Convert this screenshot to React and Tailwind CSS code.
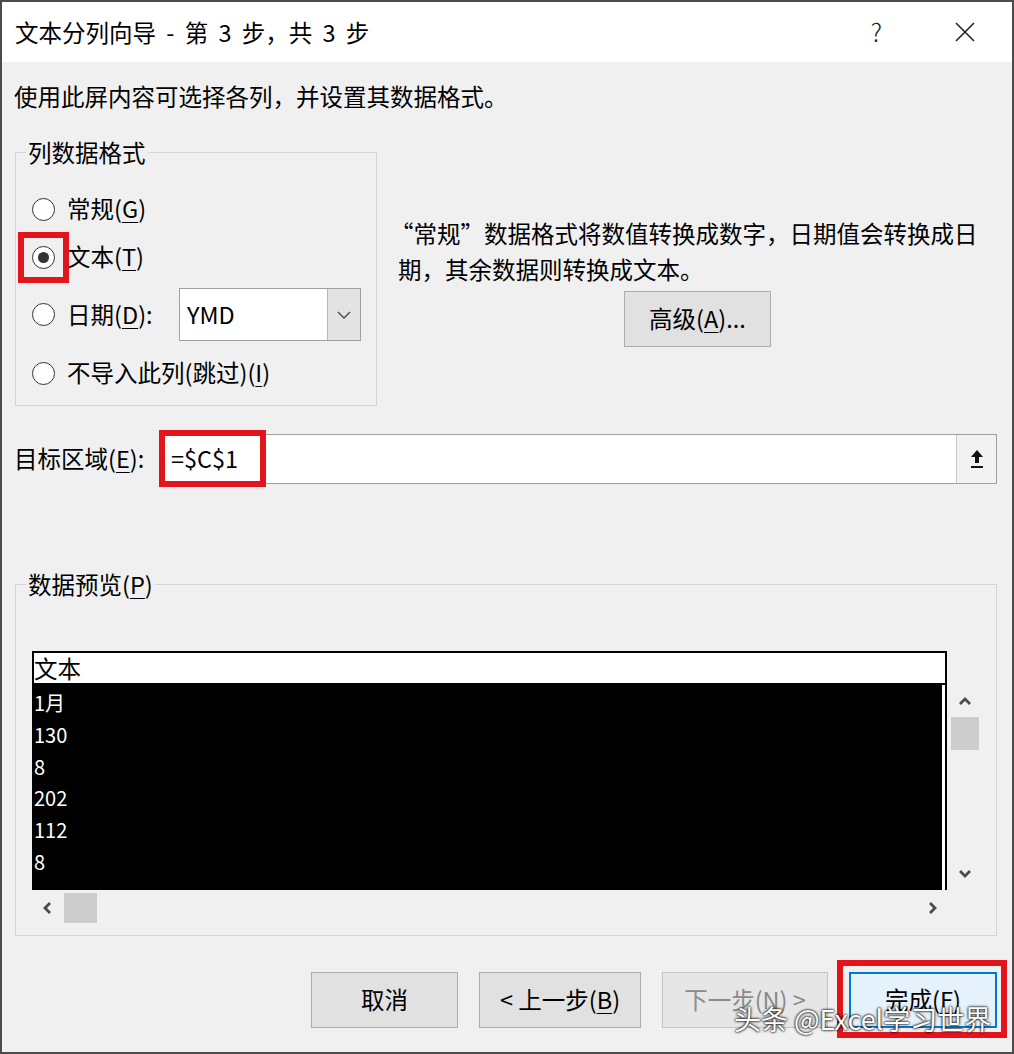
import React from "react";

const U = ({ children }) => (
  <span className="underline decoration-1 underline-offset-[4px]">{children}</span>
);

const Radio = ({ checked, highlight }) => (
  <div className="relative w-[23px] h-[23px] shrink-0">
    <div className="w-[23px] h-[23px] rounded-full border-[1.5px] border-[#333] bg-white flex items-center justify-center">
      {checked && <div className="w-[11px] h-[11px] rounded-full bg-[#333]" />}
    </div>
    {highlight && (
      <div className="absolute -left-[14px] -top-[14px] w-[51px] h-[51px] border-[6px] border-[#e3141b]" />
    )}
  </div>
);

const Chevron = ({ dir = "up", className = "" }) => {
  const pts = {
    up: "2,9 7,4 12,9",
    down: "2,4 7,9 12,4",
    left: "9,2 4,7 9,12",
    right: "5,2 10,7 5,12",
  }[dir];
  return (
    <svg className={className} width="14" height="14" viewBox="0 0 14 14">
      <polyline points={pts} fill="none" stroke="#4a4a4a" strokeWidth="2.8" strokeLinejoin="miter" />
    </svg>
  );
};

const Btn = ({ children, w, disabled, primary }) => (
  <div
    className={
      "h-[56px] flex items-center justify-center " +
      w +
      " " +
      (primary
        ? "bg-[#e5f1fb] border-2 border-[#0078d7] text-black"
        : disabled
        ? "bg-[#e6e6e6] border border-[#c4c4c4] text-[#8a8a8a]"
        : "bg-[#e1e1e1] border border-[#adadad] text-black")
    }
  >
    {children}
  </div>
);

export default function App() {
  const rows = ["1月", "130", "8", "202", "112", "8"];

  return (
    <div className="relative w-[1014px] h-[1054px] border-2 border-[#4b4b4b] bg-[#f0f0f0] flex flex-col overflow-hidden text-black text-[23.5px] font-['Noto_Sans_CJK_SC','Noto_Sans',sans-serif]">
      {/* title bar */}
      <div className="h-[60px] bg-white flex items-center pl-[13px] pr-[37px] shrink-0">
        <span className="leading-[30px] [word-spacing:5px]">文本分列向导 - 第 3 步，共 3 步</span>
        <span className="ml-auto text-[25px] font-light text-[#222]">?</span>
        <svg className="ml-[73px]" width="20" height="20" viewBox="0 0 20 20">
          <path d="M1 1 L19 19 M19 1 L1 19" stroke="#222" strokeWidth="1.6" />
        </svg>
      </div>

      <div className="flex-1 flex flex-col pl-[13px] pr-[15px]">
        <div className="mt-[19px] -ml-[1px] leading-[30px]">使用此屏内容可选择各列，并设置其数据格式。</div>

        <div className="flex mt-[26px]">
          <fieldset className="w-[362px] border border-[#d5d5d5] pl-[16px] pt-[18px] pb-[8px] shrink-0">
            <legend className="-ml-[6px] px-[2px] leading-[30px]">列数据格式</legend>
            <div className="flex items-center h-[48px]">
              <Radio />
              <span className="ml-[12px]">常规(<U>G</U>)</span>
            </div>
            <div className="flex items-center h-[48px]">
              <Radio checked highlight />
              <span className="ml-[12px]">文本(<U>T</U>)</span>
            </div>
            <div className="flex items-center h-[53px] mt-[7px]">
              <Radio />
              <span className="ml-[12px] w-[112px]">日期(<U>D</U>):</span>
              <div className="w-[182px] h-[53px] border border-[#a0a0a0] bg-white flex items-center">
                <span className="flex-1 pl-[7px]">YMD</span>
                <div className="w-[33px] h-full bg-[#e3e3e3] border-l border-[#b8b8b8] flex items-center justify-center">
                  <svg width="14" height="10" viewBox="0 0 14 10">
                    <polyline points="1,2 7,8 13,2" fill="none" stroke="#444" strokeWidth="1.3" />
                  </svg>
                </div>
              </div>
            </div>
            <div className="flex items-center h-[48px] mt-[8px]">
              <Radio />
              <span className="ml-[12px]">不导入此列(跳过)(<U>I</U>)</span>
            </div>
          </fieldset>

          <div className="flex-1 flex flex-col pl-[21px] pt-[78px]">
            <p className="leading-[36px] -ml-[8px]">
              “常规”数据格式将数值转换成数字，日期值会转换成日
              <br />
              <span className="ml-[8px]">期，其余数据则转换成文本。</span>
            </p>
            <div className="self-center mt-[4px]">
              <Btn w="w-[147px]">
                高级(<U>A</U>)...
              </Btn>
            </div>
          </div>
        </div>

        {/* destination */}
        <div className="flex items-center mt-[28px]">
          <span className="w-[145px] -ml-[1px]">目标区域(<U>E</U>):</span>
          <div className="relative flex-1 h-[50px] border border-[#a0a0a0] bg-white flex items-center">
            <span className="flex-1 pl-[11px]">=$C$1</span>
            <div className="w-[40px] h-full bg-[#f2f2f2] border-l border-[#c8c8c8] flex items-center justify-center">
              <svg width="16" height="22" viewBox="0 0 16 22">
                <path d="M8 2 L14 9 L10 9 L10 15 L6 15 L6 9 L2 9 Z" fill="#111" />
                <rect x="2" y="18" width="12" height="2" fill="#111" />
              </svg>
            </div>
            <div className="absolute -left-[1px] -top-[5px] w-[107px] h-[57px] border-[6px] border-[#e3141b]" />
          </div>
        </div>

        {/* preview */}
        <fieldset className="mt-[85px] border border-[#d5d5d5] pl-[16px] pt-[52px] pb-[12px]">
          <legend className="-ml-[6px] px-[2px] leading-[30px]">
            数据预览(<U>P</U>)
          </legend>
          <div className="flex">
            <div className="w-[915px] border-t-2 border-l-2 border-r-2 border-black">
              <div className="h-[32px] bg-white border-b-2 border-black leading-[30px]">
                文本
              </div>
              <div className="h-[205px] bg-white flex">
                <div className="flex-1 mr-[3px] bg-black text-white text-[20px] leading-[31.8px] pt-[2px]">
                  {rows.map((r, i) => (
                    <div key={i}>{r}</div>
                  ))}
                </div>
              </div>
            </div>
            <div className="ml-[3px] mt-[34px] w-[30px] h-[205px] flex flex-col items-center">
              <Chevron dir="up" className="mt-[10px]" />
              <div className="mt-[8px] w-[28px] h-[33px] bg-[#cdcdcd]" />
              <Chevron dir="down" className="mt-auto mb-[9px]" />
            </div>
          </div>
          <div className="w-[915px] h-[30px] mt-[3px] flex items-center">
            <Chevron dir="left" className="ml-[9px]" />
            <div className="ml-[9px] w-[33px] h-[30px] bg-[#cdcdcd]" />
            <Chevron dir="right" className="ml-auto mr-[8px]" />
          </div>
        </fieldset>

        {/* buttons */}
        <div className="flex justify-end gap-[21px] mt-[36px]">
          <Btn w="w-[147px]">取消</Btn>
          <Btn w="w-[162px]">
            &lt; 上一步(<U>B</U>)
          </Btn>
          <Btn w="w-[166px]" disabled>
            下一步(<U>N</U>) &gt;
          </Btn>
          <div className="relative">
            <Btn w="w-[148px]" primary>
              完成(<U>F</U>)
            </Btn>
            <div className="absolute -left-[12px] -top-[12px] -right-[10px] -bottom-[10px] border-[6px] border-[#e3141b]" />
          </div>
        </div>
      </div>

      <div className="absolute left-[732px] top-[1000px] text-[27px] leading-[34px] text-white [text-shadow:0_0_2px_#000,0_0_3px_#000]">
        头条 @Excel学习世界
      </div>
    </div>
  );
}
